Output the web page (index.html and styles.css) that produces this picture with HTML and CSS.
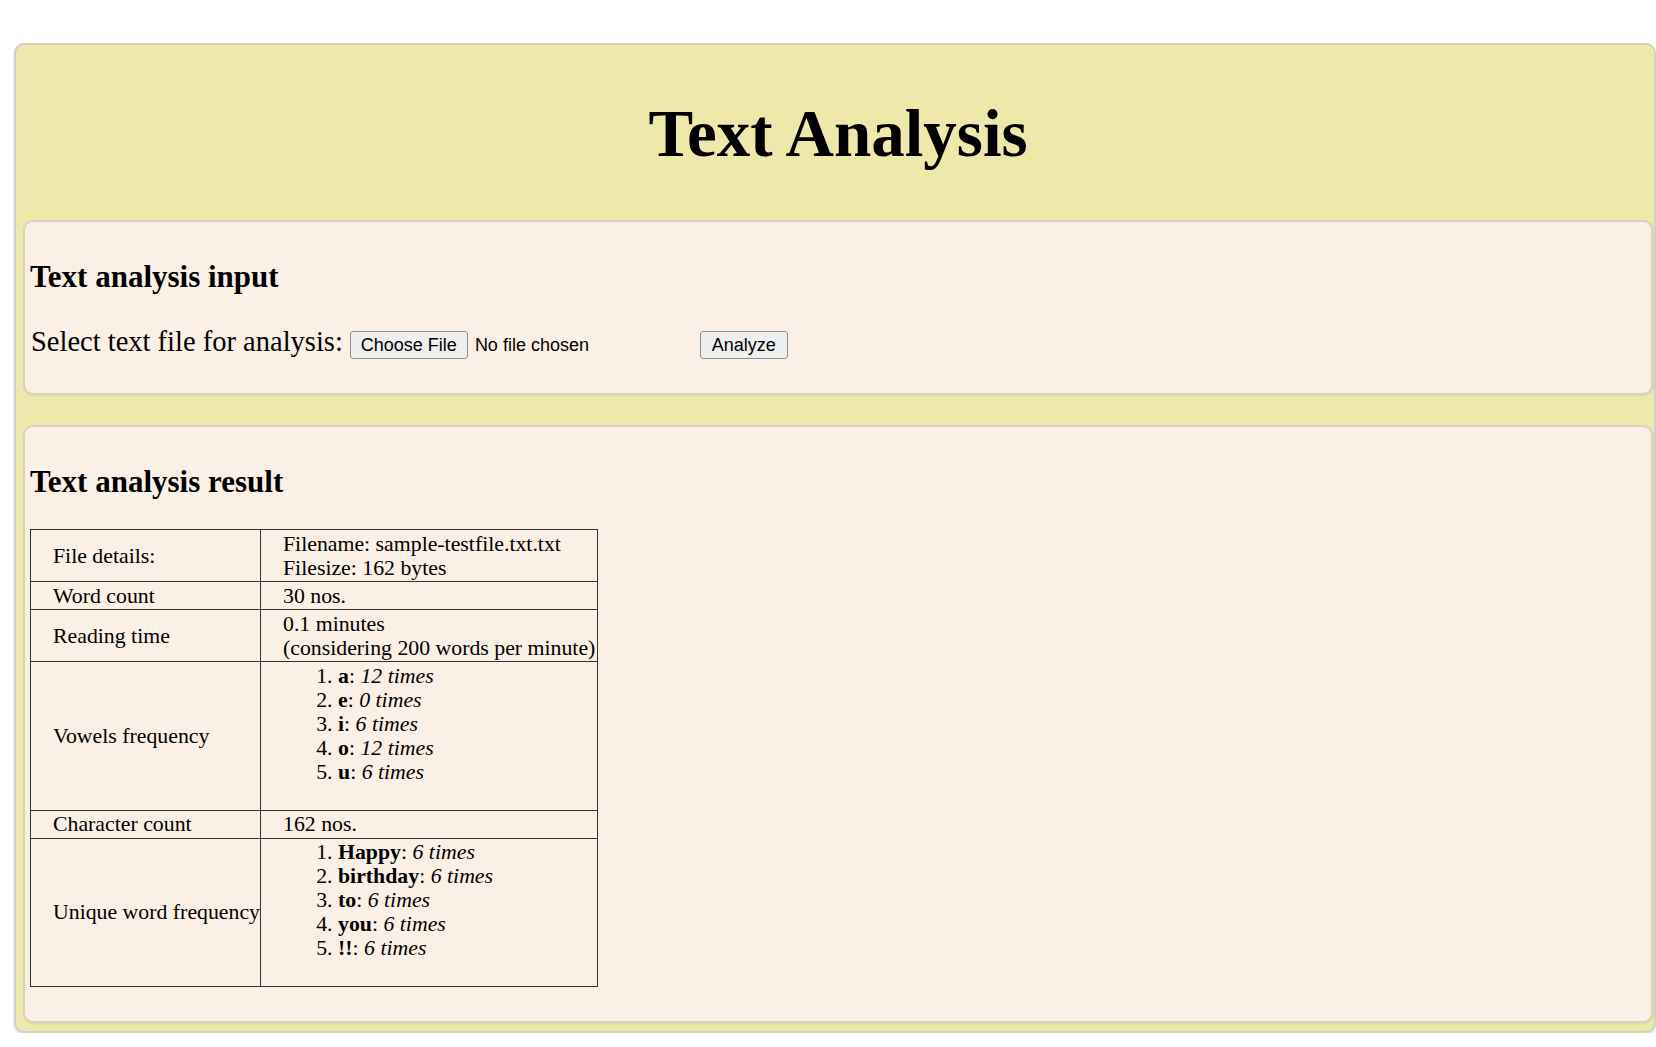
FILE: index.html
```html
<!DOCTYPE html>
<html lang="en">
<head>
<meta charset="utf-8">
<title>Text Analysis</title>
<link rel="stylesheet" href="styles.css">
</head>
<body>
<div class="page">
  <header class="header">
    <h1 class="title">Text Analysis</h1>
  </header>

  <section class="card card-input">
    <h2 class="card-title">Text analysis input</h2>
    <div class="file-row">
      <label class="file-label" for="file">Select text file for analysis:</label>
      <span class="file-input">
        <button class="btn btn-choose" type="button">Choose File</button>
        <span class="file-name">No file chosen</span>
      </span>
      <button class="btn btn-analyze" type="button">Analyze</button>
    </div>
  </section>

  <section class="card card-result">
    <h2 class="card-title">Text analysis result</h2>
    <table class="result">
      <colgroup>
        <col class="col-key">
        <col class="col-val">
      </colgroup>
      <tbody>
        <tr>
          <td>File details:</td>
          <td>Filename: sample-testfile.txt.txt<br>Filesize: 162 bytes</td>
        </tr>
        <tr>
          <td>Word count</td>
          <td>30 nos.</td>
        </tr>
        <tr>
          <td>Reading time</td>
          <td>0.1 minutes<br>(considering 200 words per minute)</td>
        </tr>
        <tr>
          <td>Vowels frequency</td>
          <td>
            <ol class="freq">
              <li><b>a</b>: <i>12 times</i></li>
              <li><b>e</b>: <i>0 times</i></li>
              <li><b>i</b>: <i>6 times</i></li>
              <li><b>o</b>: <i>12 times</i></li>
              <li><b>u</b>: <i>6 times</i></li>
            </ol>
          </td>
        </tr>
        <tr>
          <td>Character count</td>
          <td>162 nos.</td>
        </tr>
        <tr>
          <td>Unique word frequency</td>
          <td>
            <ol class="freq">
              <li><b>Happy</b>: <i>6 times</i></li>
              <li><b>birthday</b>: <i>6 times</i></li>
              <li><b>to</b>: <i>6 times</i></li>
              <li><b>you</b>: <i>6 times</i></li>
              <li><b>!!</b>: <i>6 times</i></li>
            </ol>
          </td>
        </tr>
      </tbody>
    </table>
  </section>
</div>
</body>
</html>
```

FILE: styles.css
```css
html, body {
  margin: 0;
  padding: 0;
  background: #ffffff;
}

body {
  font-family: "Liberation Serif", "Times New Roman", serif;
  color: #000;
}

.page {
  box-sizing: border-box;
  width: 1642px;
  margin: 43px 0 0 14px;
  padding: 0 1px 8px 7px;
  background: #eee8aa;
  border: 2px solid #d2d0c6;
  border-radius: 10px;
  box-shadow: 0 2px 3px rgba(0, 0, 0, 0.12);
}

.header {
  padding: 50px 0 49px;
}

.title {
  margin: 0;
  font-size: 67px;
  line-height: 76px;
  font-weight: bold;
  text-align: center;
}

.card {
  background: #faf0e6;
  border: 2px solid #d6d2c9;
  border-radius: 10px;
  padding: 37px 6px 34px 5px;
  box-shadow: 1px 1px 2px rgba(0, 0, 0, 0.08);
}

.card-result {
  margin-top: 30px;
}

.card-title {
  margin: 0 0 29.5px;
  font-size: 31px;
  line-height: 36px;
  font-weight: bold;
}

.file-row {
  display: flex;
  align-items: baseline;
  padding-left: 1px;
}

.file-label {
  font-size: 28.5px;
  line-height: 33px;
}

.file-input {
  display: inline-flex;
  align-items: baseline;
  width: 345px;
  margin-left: 7px;
  font-family: "Liberation Sans", Arial, sans-serif;
  font-size: 18px;
}

.btn {
  box-sizing: border-box;
  height: 28px;
  font-family: "Liberation Sans", Arial, sans-serif;
  font-size: 18px;
  line-height: 20px;
  color: #000;
  background: #efefef;
  border: 1px solid #8f8f8f;
  border-radius: 3px;
  padding: 0 10px;
  margin: 0;
}

.btn-analyze {
  margin-left: 5px;
  padding: 0 11px;
}

.file-name {
  margin-left: 7px;
}

.result {
  margin-top: 3.5px;
  width: 567px;
  table-layout: fixed;
  border-collapse: collapse;
  font-size: 21.8px;
  line-height: 24px;
  background: #faf0e6;
}

.col-key {
  width: 230px;
}

.col-val {
  width: 337px;
}

.result td {
  border: 1px solid #333;
  padding: 1.5px 0 1.5px 22px;
  white-space: nowrap;
  vertical-align: middle;
}

.freq {
  margin: 0 0 24.5px;
  padding-left: 55px;
}
```
